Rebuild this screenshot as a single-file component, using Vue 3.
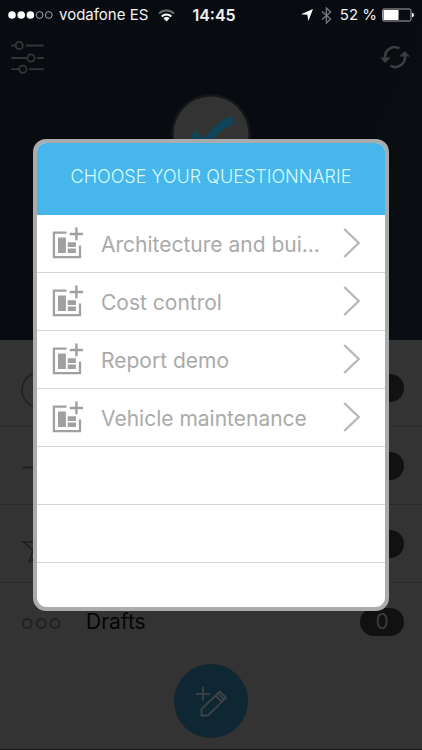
<script setup>
const questionnaires = [
  'Architecture and bui...',
  'Cost control',
  'Report demo',
  'Vehicle maintenance',
]
const spareRows = 2
</script>

<template>
  <div class="screen">
    <section class="hero">
      <header class="status">
        <div class="carrier">
          <svg class="dots" width="46" height="10" viewBox="0 0 46 10">
            <g fill="#fff">
              <circle cx="4" cy="5" r="3.8" />
              <circle cx="13.2" cy="5" r="3.8" />
              <circle cx="22.4" cy="5" r="3.8" />
            </g>
            <g fill="none" stroke="#a3a5a8" stroke-width="1">
              <circle cx="31.6" cy="5" r="3.4" />
              <circle cx="40.8" cy="5" r="3.4" />
            </g>
          </svg>
          <span>vodafone ES</span>
          <svg class="wifi" width="17" height="13" viewBox="0 0 17 13" fill="none" stroke-width="2">
            <path d="M1 4.6A10.8 10.8 0 0 1 16 4.6" stroke="#686b6f" />
            <path d="M3.7 7.4A7 7 0 0 1 13.3 7.4" stroke="#fff" />
            <path d="M8.5 12.4L5.4 9.3A4.4 4.4 0 0 1 11.6 9.3Z" fill="#fff" />
          </svg>
        </div>
        <strong class="clock">14:45</strong>
        <div class="indicators">
          <svg width="12" height="12" viewBox="0 0 12 12">
            <path d="M12 0L7.4 12L6.4 5.8L0 5.2Z" fill="#fff" />
          </svg>
          <svg class="bluetooth" width="11" height="17" viewBox="0 0 11 17" fill="none" stroke="#777a7e" stroke-width="1.3">
            <path d="M1 4.6L9.6 12L5.4 16V1L9.6 5L1 12.4" />
          </svg>
          <span>52 %</span>
          <svg width="33" height="14" viewBox="0 0 33 14">
            <rect x="1.6" y="1" width="28.4" height="12" rx="1.5" fill="none" stroke="#aaacaf" stroke-width="1" />
            <rect x="2.5" y="2" width="15" height="10" fill="#fff" />
            <path d="M31 4.8Q33 5 33 7Q33 9 31 9.2Z" fill="#fff" />
          </svg>
        </div>
      </header>

      <nav class="tools">
        <button class="tool" type="button" aria-label="Filters">
          <svg width="33" height="34" viewBox="0 0 33 34" fill="none" stroke="#343537" stroke-width="1.8" stroke-linecap="round">
            <path d="M1 5.5H4.5M15.5 5.5H32M1 18H15.5M26.5 18H32M1 29.2H8M18.5 29.2H32" />
            <circle cx="8.2" cy="5.5" r="3.6" />
            <circle cx="20" cy="18" r="3.6" />
            <circle cx="11.8" cy="29.2" r="3.6" />
          </svg>
        </button>
        <button class="tool" type="button" aria-label="Refresh">
          <svg width="30" height="24" viewBox="0 0 30 24">
            <g fill="none" stroke="#3c3d3f" stroke-width="2.6">
              <path d="M5.4 14A9.6 9.6 0 0 1 19.4 3.4" />
              <path d="M24.6 10A9.6 9.6 0 0 1 10.4 20.6" />
            </g>
            <path d="M0 12.6H10.6L5.2 18ZM19.2 11.6L24.8 6L30 11.6Z" fill="#3c3d3f" />
          </svg>
        </button>
      </nav>

      <svg class="logo" width="82" height="82" viewBox="0 0 82 82">
        <circle cx="41" cy="41" r="40" fill="#15161a" />
        <circle cx="41" cy="41" r="37.5" fill="#333" />
        <path d="M20 43L26 38L34.5 45.5Q46 28 62 22.5L64 31Q48 37 36 55Z" fill="#104459" />
      </svg>
    </section>

    <main class="folders">
      <div class="folder">
        <svg width="40" height="38" viewBox="0 0 40 38" fill="none" stroke="#202020" stroke-width="1.6">
          <circle cx="18.5" cy="21" r="17.5" />
          <path d="M19 10V21H27" />
        </svg>
        <span class="count"></span>
      </div>
      <div class="folder">
        <svg width="40" height="38" viewBox="0 0 40 38" fill="none" stroke="#202020" stroke-width="2">
          <path d="M1 20.5H38M29 11.5L38 20.5L29 29.5" />
        </svg>
        <span class="count"></span>
      </div>
      <div class="folder">
        <svg width="40" height="38" viewBox="0 0 40 38" fill="none" stroke="#202020" stroke-width="1.6">
          <path d="M2 17H14.8L19.5 4L24.2 17H37L26.8 25L31 37.5L19.5 29.5L8 37.5L12.2 25Z" />
        </svg>
        <span class="count"></span>
      </div>
      <div class="folder">
        <svg width="40" height="38" viewBox="0 0 40 38" fill="none" stroke="#202020" stroke-width="1.7">
          <circle cx="6.3" cy="20.5" r="4.6" />
          <circle cx="20.2" cy="20.5" r="4.6" />
          <circle cx="34" cy="20.5" r="4.6" />
        </svg>
        <span class="name">Drafts</span>
        <span class="count">0</span>
      </div>
    </main>

    <footer class="bottom">
      <button class="compose" type="button" aria-label="New draft">
        <svg width="74" height="74" viewBox="0 0 74 74" fill="none" stroke="#3d4347" stroke-width="1.8">
          <path d="M22 29.8H36M29 23V36.5" />
          <path d="M27.5 51.5V45L45.8 27.6L52 33.6L34 51.5ZM41.6 31.6L47.8 37.8M44 29.4L50.2 35.6" />
        </svg>
      </button>
    </footer>

    <div class="overlay">
      <section class="dialog" role="dialog" aria-labelledby="dialog-title">
        <h1 id="dialog-title" class="title">CHOOSE YOUR QUESTIONNARIE</h1>
        <ul class="list">
          <li v-for="item in questionnaires" :key="item" class="row">
            <button class="choice" type="button">
              <svg class="form-icon" width="32" height="32" viewBox="0 0 32 32">
                <path d="M14.5 5.6H1.9V30.2H28V18.6" fill="none" stroke="#a0a0a0" stroke-width="2.3" />
                <path d="M17.7 7H31M24.4 .4V13.2" fill="none" stroke="#a0a0a0" stroke-width="2.4" />
                <path d="M6 10.4H13.9V26H6ZM15.7 15.2H23.9V19.9H15.7ZM15.7 21.6H23.9V26H15.7Z" fill="#a0a0a0" />
              </svg>
              <span class="label">{{ item }}</span>
              <svg class="chevron" width="18" height="30" viewBox="0 0 18 30" fill="none" stroke="#b8b8bb" stroke-width="2.4">
                <path d="M1.2 1L15.7 15L1.2 29" />
              </svg>
            </button>
          </li>
          <li v-for="n in spareRows" :key="n" class="row"></li>
        </ul>
      </section>
    </div>
  </div>
</template>

<style>
body {
  margin: 0;
  background: #333;
}
</style>

<style scoped>
.screen {
  min-height: 100vh;
  display: flex;
  flex-direction: column;
  box-sizing: border-box;
  border-bottom: 1px solid #111;
  font-family: Inter, "Liberation Sans", sans-serif;
  background: #333;
}

button {
  margin: 0;
  padding: 0;
  border: 0;
  background: none;
  font: inherit;
  color: inherit;
}

svg {
  display: block;
  flex: none;
}

.hero {
  height: 340px;
  flex: none;
  background: linear-gradient(115deg, #080b10 0 68%, #0a0d12 85%);
}

.status {
  display: grid;
  grid-template-columns: 1fr auto 1fr;
  align-items: center;
  height: 30px;
  padding: 0 8px;
  color: #f2f2f2;
  font-size: 15px;
  line-height: 20px;
  white-space: nowrap;
}

.carrier,
.indicators {
  display: flex;
  align-items: center;
  gap: 5px;
}

.wifi {
  margin-left: 5px;
}

.indicators {
  justify-content: flex-end;
  gap: 4px;
}

.bluetooth {
  margin: 0 4px;
}

.clock {
  padding-left: 6px;
  font-size: 16px;
  font-weight: 600;
}

.tools {
  display: flex;
  justify-content: space-between;
  align-items: center;
  height: 54px;
  padding: 0 12px 0 11px;
}

.logo {
  margin: 9px auto 0;
}

.folders {
  padding-top: 9px;
}

.folder {
  display: flex;
  align-items: center;
  height: 77px;
  padding: 0 18px 0 21px;
  border-bottom: 1px solid #2a2a2a;
}

.folder:last-child {
  border-bottom-color: transparent;
}

.name {
  margin-left: 25px;
  font-size: 21px;
  line-height: 28px;
  color: #050505;
}

.count {
  width: 44px;
  height: 28px;
  margin-left: auto;
  border-radius: 14px;
  background: #111;
  color: #3c3c3c;
  font-size: 21px;
  line-height: 28px;
  text-align: center;
}

.bottom {
  display: flex;
  justify-content: center;
  padding-top: 3px;
}

.compose {
  width: 74px;
  height: 74px;
  border-radius: 50%;
  background: #0f2733;
}

.overlay {
  position: fixed;
  inset: 0;
  display: flex;
  padding: 139px 33px;
}

.dialog {
  flex: 1;
  min-width: 0;
  box-sizing: border-box;
  border: 4px solid #a9abac;
  border-radius: 13px;
  background: #fff;
  overflow: hidden;
}

.title {
  margin: 0;
  height: 72px;
  background: #47b6ea;
  color: #d5fbff;
  font-size: 18px;
  font-weight: 300;
  line-height: 68px;
  text-align: center;
  white-space: nowrap;
}

.list {
  margin: 0;
  padding: 0;
  list-style: none;
}

.row {
  box-sizing: border-box;
  height: 58px;
  border-bottom: 1px solid #d6d6d8;
}

.choice {
  display: flex;
  align-items: center;
  width: 100%;
  height: 56px;
  padding: 0 24px 0 15px;
  text-align: left;
}

.label {
  flex: 1;
  min-width: 0;
  margin: 3px 16px 0 17px;
  overflow: hidden;
  text-overflow: ellipsis;
  white-space: nowrap;
  color: #aaa;
  font-size: 21px;
  line-height: 28px;
}
</style>
